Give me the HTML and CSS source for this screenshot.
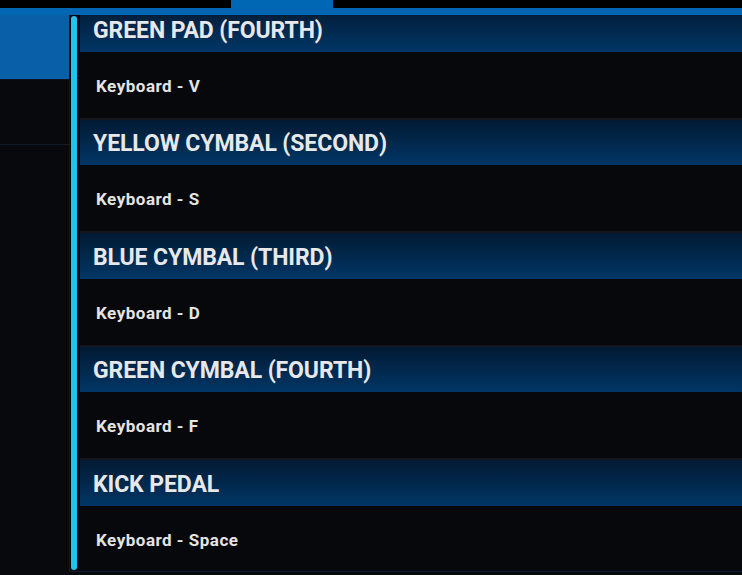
FILE: index.html
```html
<!DOCTYPE html>
<html>
<head>
<meta charset="utf-8">
<link rel="stylesheet" href="styles.css">
</head>
<body>
<div class="topbar">
  <div class="top-black"><div class="top-tab"></div></div>
  <div class="top-strip"></div>
</div>
<div class="main">
  <div class="sidebar">
    <div class="side-blue"></div>
    <div class="side-item"></div>
    <div class="side-rest"></div>
  </div>
  <div class="scroll">
    <div class="scrollbar"></div>
    <div class="list">
      <div class="list-inner">
        <div class="row-head">GREEN PAD (FOURTH)</div>
        <div class="row-body">Keyboard - V</div>
        <div class="row-head">YELLOW CYMBAL (SECOND)</div>
        <div class="row-body">Keyboard - S</div>
        <div class="row-head">BLUE CYMBAL (THIRD)</div>
        <div class="row-body">Keyboard - D</div>
        <div class="row-head">GREEN CYMBAL (FOURTH)</div>
        <div class="row-body">Keyboard - F</div>
        <div class="row-head">KICK PEDAL</div>
        <div class="row-body">Keyboard - Space</div>
      </div>
    </div>
  </div>
</div>
</body>
</html>
```
FILE: styles.css
```css
html, body {
  margin: 0;
  padding: 0;
}
body {
  width: 742px;
  height: 575px;
  overflow: hidden;
  background: #06080c;
  font-family: Roboto, "Liberation Sans", sans-serif;
}
.topbar {
  display: flex;
  flex-direction: column;
}
.top-black {
  height: 8px;
  background: #000;
  display: flex;
}
.top-tab {
  margin-left: 231px;
  width: 102px;
  background: #0067b4;
}
.top-strip {
  height: 7px;
  background: #0066b2;
}
.main {
  display: flex;
  height: 560px;
}
.sidebar {
  width: 69px;
  display: flex;
  flex-direction: column;
  background: #07090d;
}
.side-blue {
  height: 64px;
  background: #0a60a8;
  border-bottom: 1px solid #0d1522;
}
.side-item {
  height: 64px;
  border-bottom: 1px solid #121b26;
}
.side-rest {
  flex: 1;
}
.scroll {
  flex: 1;
  display: flex;
  height: 556px;
  border-left: 1px solid #0d1826;
  border-bottom: 1px solid #0f1b30;
  background: #05070a;
}
.scrollbar {
  width: 6px;
  margin: 1px 3px 1px 1px;
  border-radius: 3px;
  background: #20c5ef;
}
.list {
  flex: 1;
  overflow: hidden;
}
.list-inner {
  margin-top: -11px;
}
.row-head {
  height: 47.5px;
  box-sizing: border-box;
  border-top: 2px solid #14171d;
  background: linear-gradient(#021a33, #013666);
  color: #e6e8ea;
  font-weight: 700;
  font-size: 23px;
  display: flex;
  align-items: center;
  padding-left: 13px;
  padding-top: 3px;
  letter-spacing: -0.1px;
}
.row-body {
  height: 66px;
  background: #06080c;
  color: #e4e4e4;
  font-weight: 700;
  font-size: 17px;
  letter-spacing: 0.5px;
  display: flex;
  align-items: center;
  padding-left: 16px;
  padding-top: 2px;
  box-sizing: border-box;
}
```
